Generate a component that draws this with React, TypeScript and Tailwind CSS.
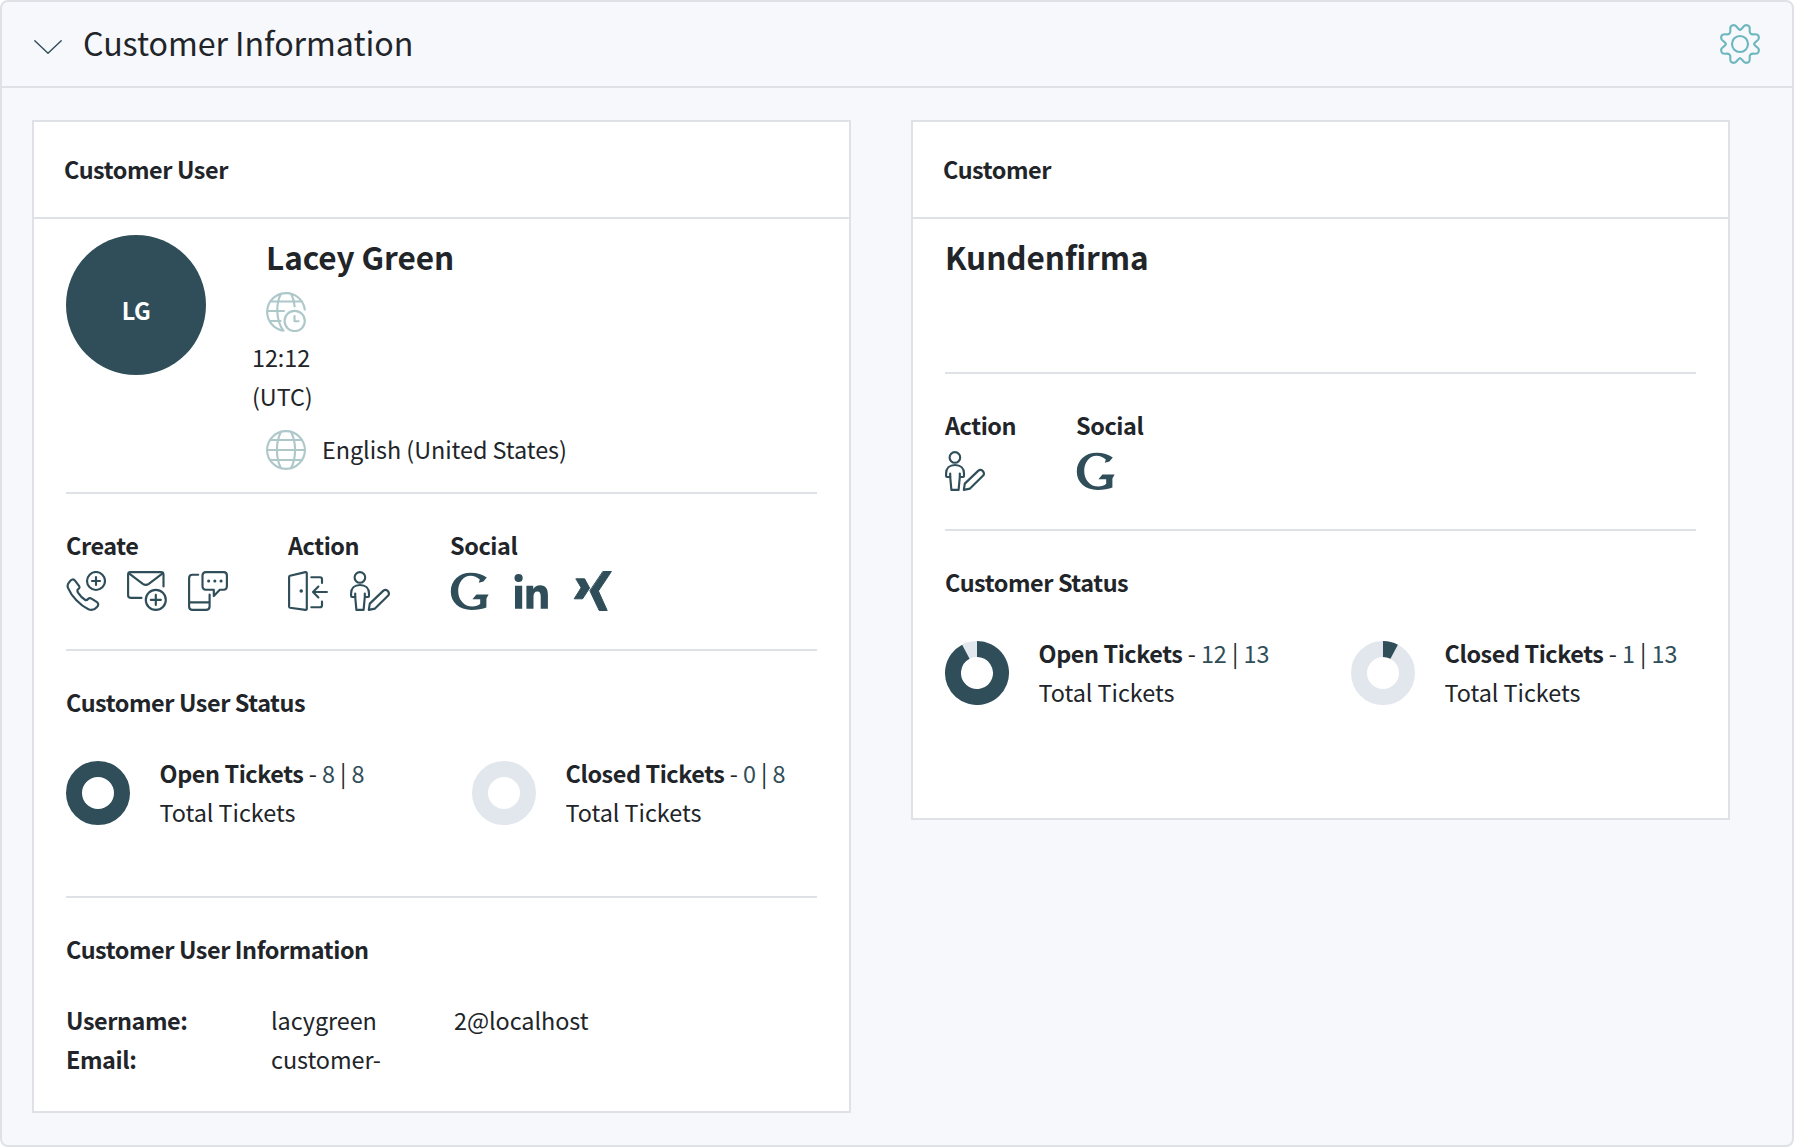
import type { ReactNode } from 'react';

function Icon({ children, className = '' }: { children: ReactNode; className?: string }) {
  return (
    <svg
      viewBox="0 0 40 40"
      fill="none"
      stroke="currentColor"
      strokeWidth="2.15"
      strokeLinecap="round"
      strokeLinejoin="round"
      className={`block size-10 shrink-0 ${className}`}
    >
      {children}
    </svg>
  );
}

function GearIcon() {
  const quarter =
    'M20 5.8C22.4 5.8 23 1.1 26 1.1C29.2 1.1 30 3 29.7 5.5C29.2 9.3 30.7 10.8 34.5 10.3C37 10 38.9 10.8 38.9 14C38.9 17 34.2 17.6 34.2 20';
  return (
    <Icon className="text-[#6cb7be]">
      <path d={quarter} />
      <path d={quarter} transform="rotate(90 20 20)" />
      <path d={quarter} transform="rotate(180 20 20)" />
      <path d={quarter} transform="rotate(270 20 20)" />
      <circle cx="20" cy="20" r="8" />
    </Icon>
  );
}

function GlobeIcon() {
  return (
    <Icon className="text-[#aec8ca]">
      <circle cx="20" cy="20" r="18.9" />
      <path d="M15 1.8C9.6 12 9.6 28 15 38.2M25 1.8C30.4 12 30.4 28 25 38.2M1 20H39M4 10H36M4 30H36" />
    </Icon>
  );
}

function GlobeClockIcon() {
  return (
    <Icon className="text-[#aec8ca]">
      <path d="M38.8 17.5A18.9 18.9 0 1 0 17.5 38.7M15 1.8C9.6 12 10 28 17 38.2M25 1.8C27.2 5.8 28.4 10 28.6 14.5M1 19H18M4 9.5H36M4 29H14.5" />
      <circle cx="28.7" cy="29" r="10.1" />
      <path d="M28.5 24V29.2H32.6" />
    </Icon>
  );
}

function PhonePlusIcon() {
  return (
    <Icon>
      <circle cx="30" cy="10" r="9" />
      <path d="M30 6V14M26 10H34" />
      <path d="M4 10.2C5.3 8.2 7.6 7.8 9 9.6L13 14.8C14 16.2 13.4 17.4 12.2 18.2C11 19.2 11.2 20.2 12 21.6C14 24.6 16.6 27.4 19 28.8C20.4 29.6 21.2 29 22 28C23 27 24.2 26.7 25.5 27.6L31 31.2C32.8 32.5 32.6 34.4 31 36C28.4 39 25.6 39.6 22.4 38.2C14 34.4 5.6 25.4 2 16.8C.8 14 1.6 12.4 4 10.2Z" />
    </Icon>
  );
}

function MailPlusIcon() {
  return (
    <Icon>
      <path d="M14.5 26.8H3.5Q1.1 26.8 1.1 24.3V3.5Q1.1 1.1 3.5 1.1H34Q36.5 1.1 36.5 3.5V15.5" />
      <path d="M2 2.4L15.8 12.8Q18.8 14.8 21.8 12.8L35.6 2.4" />
      <circle cx="28.8" cy="28.9" r="10" />
      <path d="M28.8 23.9V33.9M23.8 28.9H33.8" />
    </Icon>
  );
}

function MobileChatIcon() {
  return (
    <Icon>
      <path d="M10.2 3.7H4.5Q1.1 3.7 1.1 7.2V35.5Q1.1 38.9 4.5 38.9H18Q21.6 38.9 21.6 35.5V23.5M1.1 31.3H21.6" />
      <path d="M18 1.1H35.5Q38.9 1.1 38.9 4.5V15Q38.9 18.7 35.5 18.7H31.8L25.8 25V18.7H18Q14.5 18.7 14.5 15V4.5Q14.5 1.1 18 1.1Z" />
      <path d="M20.6 10H20.7M26.8 10H26.9M33 10H33.1" strokeWidth="3" />
    </Icon>
  );
}

function DoorIcon() {
  return (
    <Icon>
      <path d="M2 4.8L17.4 1.1Q18.8 .9 18.8 2.2V37.8Q18.8 39.1 17.4 38.9L2 36.8Q1.1 36.6 1.1 35.6V6Q1.1 5 2 4.8Z" />
      <path d="M13.2 20H13.3" strokeWidth="3.4" />
      <path d="M23.3 6.2H32Q34 6.2 34 8.2V12M23.3 36.2H32Q34 36.2 34 34.2V30.5" />
      <path d="M38.9 21H25.2M30.4 15.6L25 21L30.4 26.4" />
    </Icon>
  );
}

function PersonEditIcon({ className }: { className?: string }) {
  return (
    <Icon className={className}>
      <circle cx="9.9" cy="6.4" r="5.3" />
      <path d="M5.5 26H2Q1.1 26 1.1 25V22.5C1.1 17.5 4.5 14 10 14S19 17.5 19 22.5V25Q19 26 18.1 26H14.8L13.6 38.9H6.4L5.2 26V22.5M14.8 26V22.5" />
      <path d="M18.8 38.9L19.8 32.6L33.4 19.6Q35.6 18 37.8 20Q39.8 22.4 38.2 24.6L25 37.6Z" />
    </Icon>
  );
}

function GoogleIcon() {
  return (
    <Icon>
      <path
        fill="currentColor"
        stroke="none"
        d="M28.8 11.8L29.8 8.6C27.2 6 24 4.7 20.6 4.7C12.8 4.7 8.2 12 8.2 20C8.2 28.8 14 35.6 22.4 35.6C25.6 35.6 28.4 34.6 30.2 32.8V28.2H22.4L26.4 23.4H38.6L36.4 27.4V36.4C32.6 38 27.6 38.9 21.6 38.9C9 38.9 .8 31.6 .8 20.6C.8 9.4 9.2 1.8 20.8 1.8C27 1.8 32.6 3.6 36.8 6.6L33.4 10.4Z"
      />
    </Icon>
  );
}

function LinkedInIcon() {
  return (
    <Icon>
      <g fill="currentColor" stroke="none">
        <circle cx="7.6" cy="7" r="4.1" />
        <path d="M4 14.7H11.2V37.8H4ZM15.4 14.7H22.2V18C23.6 15.5 26 14.2 29 14.2C35 14.2 36.9 18 36.9 24V37.8H29.7V25.4C29.7 22.4 29 20.4 26.4 20.4C23.6 20.4 22.5 22.4 22.5 25.4V37.8H15.4Z" />
      </g>
    </Icon>
  );
}

function XingIcon() {
  return (
    <Icon>
      <path
        fill="currentColor"
        strokeWidth="1"
        d="M4.2 7.8H12.6L17.6 17L10.6 27.8H2.2L9 17ZM31.2 .5H39.4L26.4 20L35.2 39.5H27.2L18 20Z"
      />
    </Icon>
  );
}

function Donut({ value, total }: { value: number; total: number }) {
  const angle = (2 * Math.PI * value) / total;
  const x = 32 + 24 * Math.sin(angle);
  const y = 32 - 24 * Math.cos(angle);
  const partial = value > 0 && value < total;
  return (
    <svg viewBox="0 0 64 64" className="block size-16 shrink-0" fill="none" strokeWidth="16">
      <circle cx="32" cy="32" r="24" stroke={value === total ? '#2f4e59' : '#e2e6ed'} />
      {partial && (
        <path d={`M32 8A24 24 0 ${angle > Math.PI ? 1 : 0} 1 ${x} ${y}`} stroke="#2f4e59" />
      )}
    </svg>
  );
}

function Tickets({ label, value, total }: { label: string; value: number; total: number }) {
  return (
    <div className="flex w-[406px] shrink-0 items-start">
      <div className="pt-[7px]">
        <Donut value={value} total={total} />
      </div>
      <div className="ml-[29.6px] whitespace-nowrap">
        <div>
          <b className="tracking-[-0.42px]">{label}</b> - <span className="text-[#2f4e59]">{value}</span> |{' '}
          <span className="text-[#2f4e59]">{total}</span>
        </div>
        <div>Total Tickets</div>
      </div>
    </div>
  );
}

function Heading({ children }: { children: ReactNode }) {
  return <h3 className="font-bold tracking-[-0.42px]">{children}</h3>;
}

function IconGroup({ title, children, className = '' }: { title: string; children: ReactNode; className?: string }) {
  return (
    <div className={className}>
      <Heading>{title}</Heading>
      <div className="mt-1.5 flex gap-[21px] text-[#2f4e59]">{children}</div>
    </div>
  );
}

function Card({ title, children, className = '' }: { title: string; children: ReactNode; className?: string }) {
  return (
    <section className={`w-[819px] border-2 border-[#dee2e6] bg-white ${className}`}>
      <h2 className="h-[97px] border-b-2 border-[#dee2e6] pt-7 pl-[30px] font-bold tracking-[-0.42px]">{title}</h2>
      <div className="px-8">{children}</div>
    </section>
  );
}

function Section({ children, className = '' }: { children: ReactNode; className?: string }) {
  return <div className={`border-t-2 border-[#dee2e6] pt-8 ${className}`}>{children}</div>;
}

export default function App() {
  return (
    <div className="bg-white font-['Noto_Sans_CJK_SC',sans-serif] text-[23.4px] leading-[39px] tracking-[-0.05px] text-[#212529]">
      <main className="h-[1147px] w-[1794px] rounded-[8px] border-2 border-[#dee2e6] bg-[#f7f8fc]">
        <header className="flex h-[86px] items-start border-b-2 border-[#dee2e6] pr-8 pl-8">
          <svg
            viewBox="0 0 28 14"
            className="mt-[38px] block h-3.5 w-7"
            fill="none"
            stroke="#2f4e59"
            strokeWidth="1.4"
            strokeLinecap="round"
            strokeLinejoin="round"
          >
            <path d="M.8 .8L14 13.2L27.2 .8" />
          </svg>
          <h1 className="mt-[19px] ml-[21px] flex-1 text-[32.2px] leading-[42px]">Customer Information</h1>
          <div className="mt-[22px]">
            <GearIcon />
          </div>
        </header>

        <div className="flex items-start gap-[60px] pt-8 pl-[30px]">
          <Card title="Customer User" className="h-[993px]">
            <div className="flex h-[273px] items-start">
              <div className="mt-4 flex size-[140px] shrink-0 items-center justify-center rounded-full bg-[#2f4e59] pt-[11px] font-bold tracking-[-0.42px] text-white">
                LG
              </div>
              <div className="ml-[46px]">
                <h2 className="mt-4 ml-[14px] text-[31.5px] leading-[42px] font-bold">Lacey Green</h2>
                <div className="mt-[15px] ml-[14px]">
                  <GlobeClockIcon />
                </div>
                <div className="mt-1.5">
                  12:12
                  <br />
                  (UTC)
                </div>
                <div className="mt-[14px] ml-[14px] flex items-start gap-4">
                  <GlobeIcon />
                  <span>English (United States)</span>
                </div>
              </div>
            </div>
            <Section className="flex h-[157px]">
              <IconGroup title="Create" className="w-[222px]">
                <PhonePlusIcon />
                <MailPlusIcon />
                <MobileChatIcon />
              </IconGroup>
              <IconGroup title="Action" className="w-[162px]">
                <DoorIcon />
                <PersonEditIcon className="ml-px" />
              </IconGroup>
              <IconGroup title="Social">
                <GoogleIcon />
                <LinkedInIcon />
                <XingIcon />
              </IconGroup>
            </Section>
            <Section className="h-[247px]">
              <Heading>Customer User Status</Heading>
              <div className="mt-8 flex">
                <Tickets label="Open Tickets" value={8} total={8} />
                <Tickets label="Closed Tickets" value={0} total={8} />
              </div>
            </Section>
            <Section>
              <Heading>Customer User Information</Heading>
              <div className="mt-8 flex">
                <div className="w-[205px] font-bold tracking-[-0.42px]">
                  Username:
                  <br />
                  Email:
                </div>
                <div className="w-[183px]">
                  lacygreen
                  <br />
                  customer-
                </div>
                <div>2@localhost</div>
              </div>
            </Section>
          </Card>

          <Card title="Customer" className="h-[700px]">
            <div className="h-[153px] pt-4">
              <h2 className="text-[31.5px] leading-[42px] font-bold">Kundenfirma</h2>
            </div>
            <Section className="flex h-[157px]">
              <IconGroup title="Action" className="w-[131px]">
                <PersonEditIcon />
              </IconGroup>
              <IconGroup title="Social">
                <GoogleIcon />
              </IconGroup>
            </Section>
            <Section>
              <Heading>Customer Status</Heading>
              <div className="mt-8 flex">
                <Tickets label="Open Tickets" value={12} total={13} />
                <Tickets label="Closed Tickets" value={1} total={13} />
              </div>
            </Section>
          </Card>
        </div>
      </main>
    </div>
  );
}
